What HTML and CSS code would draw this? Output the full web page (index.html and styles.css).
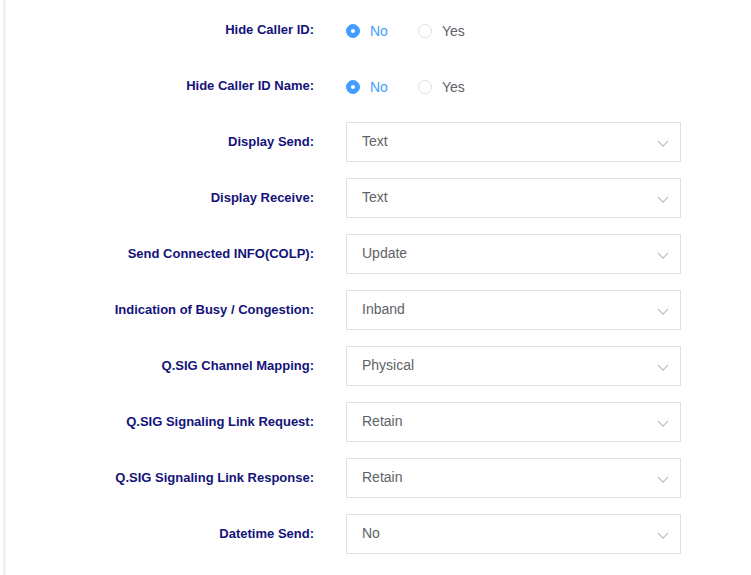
FILE: index.html
```html
<!DOCTYPE html>
<html lang="en">
<head>
<meta charset="UTF-8">
<title>Trunk Settings</title>
<link rel="stylesheet" href="styles.css">
</head>
<body>

<div class="page">
  <form class="settings-form">

    <div class="form-item">
      <label class="form-label">Hide Caller ID:</label>
      <div class="form-content radio-group">
        <span class="radio is-checked"><span class="radio-inner"></span><span class="radio-label">No</span></span>
        <span class="radio"><span class="radio-inner"></span><span class="radio-label">Yes</span></span>
      </div>
    </div>

    <div class="form-item">
      <label class="form-label">Hide Caller ID Name:</label>
      <div class="form-content radio-group">
        <span class="radio is-checked"><span class="radio-inner"></span><span class="radio-label">No</span></span>
        <span class="radio"><span class="radio-inner"></span><span class="radio-label">Yes</span></span>
      </div>
    </div>

    <div class="form-item">
      <label class="form-label">Display Send:</label>
      <div class="form-content">
        <div class="select"><span class="select-value">Text</span><svg class="arrow" width="12" height="7" viewBox="0 0 12 7"><path d="M1 1l5 5 5-5" fill="none" stroke="#c0c4cc" stroke-width="1.3"/></svg></div>
      </div>
    </div>

    <div class="form-item">
      <label class="form-label">Display Receive:</label>
      <div class="form-content">
        <div class="select"><span class="select-value">Text</span><svg class="arrow" width="12" height="7" viewBox="0 0 12 7"><path d="M1 1l5 5 5-5" fill="none" stroke="#c0c4cc" stroke-width="1.3"/></svg></div>
      </div>
    </div>

    <div class="form-item">
      <label class="form-label">Send Connected INFO(COLP):</label>
      <div class="form-content">
        <div class="select"><span class="select-value">Update</span><svg class="arrow" width="12" height="7" viewBox="0 0 12 7"><path d="M1 1l5 5 5-5" fill="none" stroke="#c0c4cc" stroke-width="1.3"/></svg></div>
      </div>
    </div>

    <div class="form-item">
      <label class="form-label">Indication of Busy / Congestion:</label>
      <div class="form-content">
        <div class="select"><span class="select-value">Inband</span><svg class="arrow" width="12" height="7" viewBox="0 0 12 7"><path d="M1 1l5 5 5-5" fill="none" stroke="#c0c4cc" stroke-width="1.3"/></svg></div>
      </div>
    </div>

    <div class="form-item">
      <label class="form-label">Q.SIG Channel Mapping:</label>
      <div class="form-content">
        <div class="select"><span class="select-value">Physical</span><svg class="arrow" width="12" height="7" viewBox="0 0 12 7"><path d="M1 1l5 5 5-5" fill="none" stroke="#c0c4cc" stroke-width="1.3"/></svg></div>
      </div>
    </div>

    <div class="form-item">
      <label class="form-label">Q.SIG Signaling Link Request:</label>
      <div class="form-content">
        <div class="select"><span class="select-value">Retain</span><svg class="arrow" width="12" height="7" viewBox="0 0 12 7"><path d="M1 1l5 5 5-5" fill="none" stroke="#c0c4cc" stroke-width="1.3"/></svg></div>
      </div>
    </div>

    <div class="form-item">
      <label class="form-label">Q.SIG Signaling Link Response:</label>
      <div class="form-content">
        <div class="select"><span class="select-value">Retain</span><svg class="arrow" width="12" height="7" viewBox="0 0 12 7"><path d="M1 1l5 5 5-5" fill="none" stroke="#c0c4cc" stroke-width="1.3"/></svg></div>
      </div>
    </div>

    <div class="form-item">
      <label class="form-label">Datetime Send:</label>
      <div class="form-content">
        <div class="select"><span class="select-value">No</span><svg class="arrow" width="12" height="7" viewBox="0 0 12 7"><path d="M1 1l5 5 5-5" fill="none" stroke="#c0c4cc" stroke-width="1.3"/></svg></div>
      </div>
    </div>

  </form>
</div>

</body>
</html>
```

FILE: styles.css
```css
body {
  font-family: "Liberation Sans", Arial, sans-serif;
  background-color: #fff;
  margin: 0;
  padding: 0;
}

.page {
  margin-left: 3px;
  border-left: 3px solid #eef0f6;
  min-height: 575px;
  box-sizing: border-box;
  padding-top: 10px;
}

.settings-form {
  margin: 0;
}

.form-item {
  display: flex;
  align-items: center;
  height: 40px;
  margin-bottom: 16px;
}

.form-label {
  width: 340px;
  box-sizing: border-box;
  padding-right: 32px;
  padding-bottom: 2px;
  text-align: right;
  font-size: 13px;
  font-weight: bold;
  color: #13137a;
}

.form-content {
  display: flex;
  align-items: center;
}

.radio-group {
  margin-top: 2px;
}

/* Radio buttons */
.radio {
  display: inline-flex;
  align-items: center;
  margin-right: 30px;
  font-size: 14px;
  color: #606266;
  cursor: pointer;
}

.radio-inner {
  width: 14px;
  height: 14px;
  box-sizing: border-box;
  border: 1px solid #dcdfe6;
  border-radius: 50%;
  background-color: #fff;
  position: relative;
}

.radio.is-checked .radio-inner {
  border-color: #409eff;
  background-color: #409eff;
}

.radio.is-checked .radio-inner::after {
  content: "";
  position: absolute;
  width: 4px;
  height: 4px;
  border-radius: 50%;
  background-color: #fff;
  left: 50%;
  top: 50%;
  transform: translate(-50%, -50%);
}

.radio-label {
  padding-left: 10px;
}

.radio.is-checked .radio-label {
  color: #409eff;
}

/* Selects */
.select {
  width: 335px;
  height: 40px;
  box-sizing: border-box;
  border: 1px solid #dcdfe6;
  padding: 0 11px 0 15px;
  display: flex;
  align-items: center;
  justify-content: space-between;
  font-size: 14px;
  color: #606266;
}

.select-value {
  margin-bottom: 2px;
}

.select .arrow {
  margin-top: 3px;
}
```
